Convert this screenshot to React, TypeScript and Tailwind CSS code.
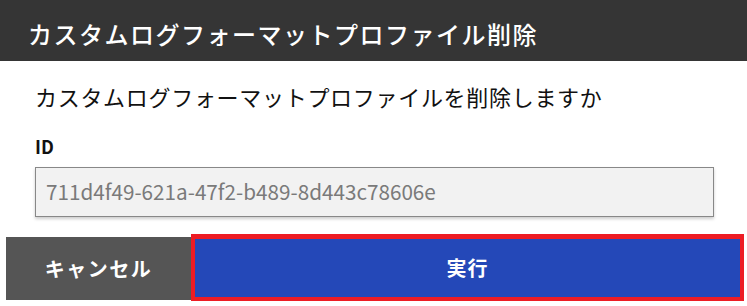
import React from "react";

export default function App() {
  const font = { fontFamily: '"Noto Sans CJK JP", "Noto Sans", sans-serif' };
  return (
    <div className="w-[747px] h-[306px] bg-white overflow-hidden" style={font}>
      <div className="h-[61px] bg-[#353535] flex items-center pl-[28px] pt-[6px]">
        <span className="text-white text-[24px] font-medium tracking-[1.5px] leading-none">
          カスタムログフォーマットプロファイル削除
        </span>
      </div>
      <div className="pl-[35px] pr-[33px]">
        <div className="mt-[24px] text-[22px] text-[#111] leading-none tracking-[0.7px]">
          カスタムログフォーマットプロファイルを削除しますか
        </div>
        <div className="mt-[30px] text-[18px] font-bold text-[#111] leading-none">ID</div>
        <div className="mt-[12px] h-[50px] bg-[#f2f2f2] border border-[#888] shadow-[0_2px_3px_rgba(0,0,0,0.2)] flex items-center pl-[10px] text-[20.7px] text-[#7a7a7a]">
          711d4f49-621a-47f2-b489-8d443c78606e
        </div>
      </div>
      <div className="mt-[17px] flex items-start pl-[6px] pr-[3px]">
        <button className="mt-[3px] w-[185px] h-[63px] bg-[#555555] text-white text-[20px] font-bold tracking-[1.5px] flex items-center justify-center">
          キャンセル
        </button>
        <button className="flex-1 h-[67px] bg-[#2448b8] border-[4px] border-t-[5px] border-[#ed1c24] text-white text-[20px] font-bold tracking-[1px] flex items-center justify-center">
          実行
        </button>
      </div>
    </div>
  );
}
